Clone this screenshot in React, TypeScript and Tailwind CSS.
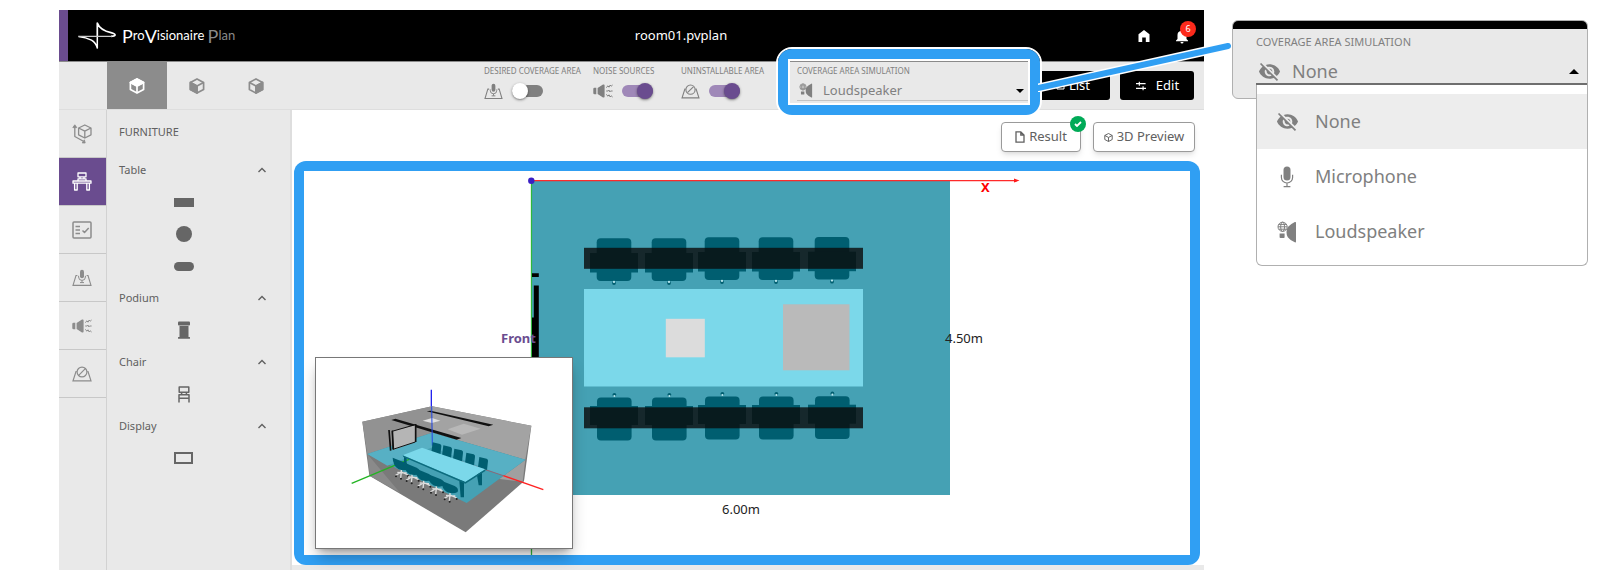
import { useState } from "react";
import type { ReactNode } from "react";

type IconProps = { className?: string };

/* ---------- icons ---------- */

function Cube({ face, className }: IconProps & { face: "top" | "left" | "right" | "none" }) {
  return (
    <svg viewBox="0 0 16 16" className={className} fill="none" stroke="currentColor" strokeWidth="1.700" strokeLinejoin="round" aria-hidden="true">
      <path d="M8 .9 14.6 4.4v7.2L8 15.1 1.4 11.6V4.4Z" />
      <path d="M1.4 4.4 8 7.9l6.6-3.5M8 7.9v7.2" />
      {face === "top" && <path fill="currentColor" d="M8 .9 14.6 4.4 8 7.9 1.4 4.4Z" />}
      {face === "left" && <path fill="currentColor" d="M1.4 4.4 8 7.9v7.2L1.4 11.6Z" />}
      {face === "right" && <path fill="currentColor" d="M14.6 4.4 8 7.9v7.2l6.6-3.5Z" />}
    </svg>
  );
}

function MicArea({ className }: IconProps) {
  return (
    <svg viewBox="0 0 20 18" className={className} fill="none" stroke="currentColor" strokeWidth="1.1" aria-hidden="true">
      <path d="M5.400 6.500H4L1 16.400h18L16 6.500h-1.400" />
      <rect x="8" y=".800" width="4" height="8.400" rx="2" fill="currentColor" stroke="none" />
      <path d="M6.600 6.800v1.200a3.400 3.400 0 0 0 6.800 0V6.800M10 11.400v2M8 13.600h4" strokeWidth="1" />
    </svg>
  );
}

function NoiseSource({ className }: IconProps) {
  return (
    <svg viewBox="0 0 20 14" className={className} fill="none" stroke="currentColor" strokeWidth="1" aria-hidden="true">
      <path fill="currentColor" stroke="none" d="M1.500 3.800h1.800v6.400H1.500Q.300 10.200.300 9V5Q.300 3.800 1.500 3.800ZM4.600 4 10 .600Q11.600 0 11.600 1.600v10.800q0 1.600-1.600 1L4.600 10Z" />
      <path d="M13.200 3.600 15 1.800l1 1.400L17.200 1l1 1.200L19.600 1M13.200 7h2l.800-.900.800 1.800.800-.900h2M13.200 10.400 15 12.200l1-1.400 1.200 2.200 1-1.200 1.400 1.200" />
    </svg>
  );
}

function NoInstall({ className }: IconProps) {
  return (
    <svg viewBox="0 0 20 16" className={className} fill="none" stroke="currentColor" strokeWidth="1.200" aria-hidden="true">
      <path d="M4.800 5.500H4L1 14.800h18L16 5.500h-.800" />
      <circle cx="10" cy="6" r="4.900" />
      <path d="m6.700 9.300 6.600-6.600" />
    </svg>
  );
}

function LoudspeakerIcon({ className }: IconProps) {
  return (
    <svg viewBox="0 0 20 22" className={className} fill="none" stroke="currentColor" strokeWidth="1" aria-hidden="true">
      <circle cx="5.600" cy="5.800" r="4.600" />
      <ellipse cx="5.600" cy="5.800" rx="2" ry="4.600" />
      <path d="M1 5.800h9.200M1.800 3.400h7.600M1.800 8.200h7.600" />
      <path fill="currentColor" stroke="none" d="M2.600 12.400h5v3.800q0 .800-.800.800H3.400q-.800 0-.800-.800ZM19 1.800v18.800q0 1.200-1.200.700-5-2.200-7-5Q9.500 14.500 9.500 11.300q0-3.800 1.600-5.500 2.600-2.600 6.700-4.700Q19 .500 19 1.800Z" />
    </svg>
  );
}

function MicIcon({ className }: IconProps) {
  return (
    <svg viewBox="0 0 20 22" className={className} fill="none" stroke="currentColor" strokeWidth="1.200" aria-hidden="true">
      <rect x="6.500" y=".600" width="7" height="14" rx="3.500" fill="currentColor" stroke="none" />
      <path d="M4.400 8.800v2.600a5.600 5.600 0 0 0 11.200 0V8.800M10 17v3.600M6.600 20.700h6.800" />
    </svg>
  );
}

function HiddenIcon({ className }: IconProps) {
  return (
    <svg viewBox="0 0 24 24" className={className} fill="currentColor" aria-hidden="true">
      <path d="M12 7c2.760 0 5 2.240 5 5 0 .650-.130 1.260-.360 1.830l2.920 2.920c1.510-1.260 2.700-2.890 3.430-4.750-1.730-4.390-6-7.500-11-7.500-1.400 0-2.740.250-3.980.700l2.160 2.160C10.740 7.130 11.350 7 12 7zM2 4.270l2.280 2.280.460.460C3.080 8.300 1.780 10.020 1 12c1.730 4.390 6 7.500 11 7.500 1.550 0 3.030-.300 4.380-.840l.420.420L19.730 22 21 20.730 3.270 3 2 4.270zM7.530 9.800l1.550 1.550c-.050.210-.080.430-.080.650 0 1.660 1.340 3 3 3 .220 0 .440-.030.650-.080l1.550 1.550c-.670.330-1.410.530-2.200.530-2.760 0-5-2.240-5-5 0-.790.200-1.530.530-2.200zm4.310-.780 3.150 3.150.020-.160c0-1.660-1.340-3-3-3l-.170.010z" />
    </svg>
  );
}

function ModelAxes({ className }: IconProps) {
  return (
    <svg viewBox="0 0 20 20" className={className} fill="none" stroke="currentColor" strokeWidth="1.300" strokeLinejoin="round" aria-hidden="true">
      <path d="M12.800 1 19 4v6.800L12.800 14 6.600 10.800V4ZM6.600 4l6.200 3.200L19 4M12.800 7.200V14" />
      <path d="M2.800 2v10.500l8.600 4.700" />
      <path fill="currentColor" strokeWidth=".800" d="M.800 3.600 2.800.800l2 2.800ZM10.200 18.900l3 .100-.800-3.200Z" />
    </svg>
  );
}

function DeskIcon({ className }: IconProps) {
  return (
    <svg viewBox="0 0 20 19" className={className} fill="none" stroke="currentColor" strokeWidth="1.300" strokeLinejoin="round" aria-hidden="true">
      <path d="M6 1h8v3.800H6ZM8 4.800v2h4v-2M6 9V6.800h8V9M1 9h18v2.200H1ZM2.600 11.200V18h2.600v-6.800M14.800 11.200V18h2.600v-6.800" />
    </svg>
  );
}

function ChecklistIcon({ className }: IconProps) {
  return (
    <svg viewBox="0 0 20 18" className={className} fill="none" stroke="currentColor" strokeWidth="1.500" strokeLinejoin="round" aria-hidden="true">
      <rect x="1" y="1" width="18" height="16" rx="1" />
      <path d="M3.500 5.500H8M3.500 9H8M3.500 12.500H8M10.500 9.500l2 2 4.200-4.500" />
    </svg>
  );
}

function ChairIcon({ className }: IconProps) {
  return (
    <svg viewBox="0 0 12 17" className={className} fill="none" stroke="currentColor" strokeWidth="1.500" strokeLinejoin="round" aria-hidden="true">
      <path d="M1.200 1h9.600v5.200H1.200ZM3.600 6.200v2.400M8.400 6.200v2.400M1 16.500V8.800h10v7.700M1 12.200h10" />
    </svg>
  );
}

function PodiumIcon({ className }: IconProps) {
  return (
    <svg viewBox="0 0 12 18" className={className} fill="currentColor" aria-hidden="true">
      <rect y=".5" width="12" height="4" rx="1" />
      <rect x="1.500" y="5" width="9" height="11" />
      <rect y="16" width="12" height="1.800" rx=".5" />
    </svg>
  );
}

function SwapIcon({ className }: IconProps) {
  return (
    <svg viewBox="0 0 14 12" className={className} fill="none" stroke="currentColor" strokeWidth="1.400" aria-hidden="true">
      <path d="M1 3.200h11.500M5 .8v4.800M1 8.800h12M9.500 6.400v4.800" />
    </svg>
  );
}

function Chevron({ className }: IconProps) {
  return (
    <svg viewBox="0 0 8 6" className={className} fill="none" stroke="currentColor" strokeWidth="1.400" aria-hidden="true">
      <path d="m.500 5 3.500-3.500L7.500 5" />
    </svg>
  );
}

function Logo() {
  return (
    <svg viewBox="0 0 38 27" className="h-[27px] w-[38px]" fill="none" stroke="white" strokeLinejoin="round" aria-hidden="true">
      <path d="M19.300 14.400V1Q22 8.200 33 10.600 37.500 11.800 37 13.200 36.500 14.400 33 14.400" strokeWidth="1.700" />
      <path d="M.500 14.400Q8 15.200 13.500 18.200 18 21 19.300 26V14.400" strokeWidth="1.500" />
      <path d="M.5 14.400H34" strokeWidth="1.300" stroke="#c8c8c8" />
    </svg>
  );
}

/* ---------- controls ---------- */

function ToggleField({ id, label, icon, defaultOn, className }: { id: string; label: string; icon: ReactNode; defaultOn: boolean; className: string }) {
  const [on, setOn] = useState(defaultOn);
  return (
    <div className={`flex flex-col pb-1.5 text-[#808080] ${className}`}>
      <label htmlFor={id} className="whitespace-nowrap text-[8px] leading-[17px]">{label}</label>
      <div className="flex h-6 items-center gap-[9px]">
        {icon}
        <span className="relative flex h-4 w-[31px] items-center">
          <input
            id={id}
            type="checkbox"
            role="switch"
            checked={on}
            onChange={() => setOn(!on)}
            className="peer h-3 w-full cursor-pointer appearance-none rounded-full bg-[#808080] checked:bg-[#9f88b8]"
          />
          <span className="pointer-events-none absolute left-0 size-4 rounded-full bg-white shadow-sm shadow-black/40 peer-checked:left-auto peer-checked:right-0 peer-checked:bg-[#6a4c8f]" />
        </span>
      </div>
    </div>
  );
}

function RailButton({ label, active, children }: { label: string; active?: boolean; children: ReactNode }) {
  return (
    <button
      type="button"
      aria-label={label}
      className={`flex h-12 w-full items-center justify-center border-b border-[#c8c8c8] pr-[2px] ${active ? "bg-[#6a4c8f] text-white" : "text-[#8c8c8c]"}`}
    >
      {children}
    </button>
  );
}

function Section({ title, items }: { title: string; items: { name: string; shape: ReactNode }[] }) {
  const [open, setOpen] = useState(true);
  return (
    <section>
      <button type="button" aria-expanded={open} onClick={() => setOpen(!open)} className="flex h-8 w-full items-center justify-between pl-3 pr-6 text-[11px]">
        {title}
        <Chevron className={`h-[6px] w-2 ${open ? "" : "rotate-180"}`} />
      </button>
      {open &&
        items.map((item) => (
          <button key={item.name} type="button" aria-label={item.name} className="flex h-8 w-full items-center justify-center pr-[30px] text-[#666]">
            {item.shape}
          </button>
        ))}
    </section>
  );
}

/* ---------- room drawings ---------- */

const seats = [
  { x: 614, y: 0 },
  { x: 669, y: 0 },
  { x: 722, y: -1 },
  { x: 776, y: -1 },
  { x: 832, y: -1.300 },
];

function FloorPlan() {
  return (
    <svg viewBox="304 171 886 384" className="size-full" role="img" aria-label="Floor plan of the room" fontFamily="Noto Sans, sans-serif" fontSize="13">
      <rect x="531.500" y="181" width="418.500" height="314" fill="#45a1b4" />
      <path d="M531.500 181v374" stroke="#30b83c" strokeWidth="1.300" />
      <path d="M531 180.600h484" stroke="#ff2a2a" strokeWidth="1.400" />
      <path d="m1014 178.600 5.500 2-5.500 2Z" fill="#ff1a1a" />
      <circle cx="531.300" cy="180.800" r="3.200" fill="#3a1fc4" />
      <path d="M532 273.300h6.800v3.600H532ZM533.800 285.400h5V360h-6.800V317.500h1.800Z" fill="#000" />
      {seats.map((s) => (
        <g key={s.x} fill="#005e70">
          <rect x={s.x - 17.300} y={238.300 + s.y} width="34.600" height="42.600" rx="4" />
          <rect x={s.x - 24} y={253 + s.y} width="48" height="19.500" />
          <circle cx={s.x} cy={283 + s.y} r="1.900" />
          <circle cx={s.x} cy={281.900 + s.y} r="1.100" fill="#b9e9f0" />
          <rect x={s.x - 17} y={397.600 + s.y} width="34.600" height="42.800" rx="4" />
          <rect x={s.x - 24} y={406 + s.y} width="48" height="19" />
          <circle cx={s.x + 0.400} cy={394.800 + s.y} r="1.900" />
          <circle cx={s.x + 0.400} cy={396 + s.y} r="1.100" fill="#b9e9f0" />
        </g>
      ))}
      <rect x="584" y="247.800" width="279" height="21" fill="#0a0a0a" opacity=".8" />
      <rect x="584" y="407.300" width="279" height="21" fill="#0a0a0a" opacity=".8" />
      <rect x="584" y="289" width="279" height="97.500" fill="#7bd8ea" />
      <rect x="665.800" y="318.800" width="39" height="38.500" fill="#dcdcdc" />
      <rect x="783" y="304.300" width="66.500" height="66" fill="#bababa" />
      <text x="501" y="343" fill="#6a4c8f" fontWeight="700">Front</text>
      <text x="981" y="192" fill="#f00" fontWeight="700">X</text>
      <text x="945" y="343" fill="#222">4.50m</text>
      <text x="722" y="514" fill="#222">6.00m</text>
    </svg>
  );
}

const backSeats = [
  [396, 275],
  [428, 284],
  [461, 294],
  [497, 306],
  [536, 319],
];
const frontSeats = [
  [300, 345],
  [332, 359],
  [367, 377],
  [405, 394],
  [446, 414],
];

function RoomPreview() {
  return (
    <svg viewBox="48 22 768 570" className="block h-[190px] w-64" role="img" aria-label="Three-dimensional room view">
      <path d="M187 213 396 167 694 225 672 392 497 545 208 375Z" fill="#7a7a7a" />
      <path d="M396 167 694 225 676 327 397 246Z" fill="#a3a3a3" />
      <path d="M396 167 187 213 202 310 397 246Z" fill="#929292" />
      <path d="m202 310 8 66 90 50Z" fill="#8a8a8a" />
      <path d="m676 327-8 66-70-8Z" fill="#a0a0a0" />
      <path d="M202 310 397 246 676 327 500 457Z" fill="#45a1b4" />
      <path d="M202 310 397 246 676 327 610 376 397 290 262 345Z" fill="#57b0c4" />
      <path d="m380 182 12-2 188 42-14 5Z" fill="#111" />
      <path d="m274 208 12-4 198 58-14 5Z" fill="#111" />
      <path d="m443 236 48-17 51 15-56 18Z" fill="#b8b8b8" />
      <path d="m368 210 28-8 25 8-26 7Z" fill="#e0e0e0" />
      <path d="m277 242 68-18v50l-66 24Z" fill="#b5b5b5" />
      <path d="m277 242 2 54 67-22M276 242l70-20" stroke="#111" strokeWidth="3" fill="none" />
      <path d="m277 240 3 56M347 220v54M267 238l5 62" stroke="#111" strokeWidth="5" fill="none" />
      <path d="M394 117v50" stroke="#2323ee" strokeWidth="4" />
      <path d="M395 167l2 118" stroke="#2348e8" strokeWidth="3" />
      <path d="m155 398 172-72" stroke="#22b422" strokeWidth="4" />
      <path d="m460 325 150 50" stroke="#8c6878" strokeWidth="3" />
      <path d="m610 375 120 42" stroke="#f22" strokeWidth="4" />
      {backSeats.map(([x, y]) => (
        <path key={x} d={`M${x + 2} ${y}l22 5q5 2 4 7l-3 27-27-8Z`} fill="#005e70" />
      ))}
      <path d="m530 368 16-6v42h-10Z" fill="#005e70" />
      <path d="m312 318 8 2v24h-8Z" fill="#005e70" />
      {frontSeats.map(([x, y]) => (
        <g key={x}>
          <path d={`M${x + 4} ${y + 5}v14M${x - 14} ${y + 30}l18-11 20 9M${x + 4} ${y + 19}l-2 18M${x - 8} ${y + 20}l28 2`} stroke="#dedede" strokeWidth="4" fill="none" />
          <path d={`M${x - 22} ${y - 24}l40 16q13 6 9 18-14 8-32 0-16-10-17-34Z`} fill="#005e70" />
          <circle cx={x - 12} cy={y + 32} r="3" fill="#222" />
          <circle cx={x + 3} cy={y + 39} r="3" fill="#222" />
          <circle cx={x + 24} cy={y + 31} r="3" fill="#222" />
        </g>
      ))}
      <path d="m478 390 14-2v52h-10Z" fill="#005e70" />
      <path d="m308 314 58-23 190 65-60 38Z" fill="#7bd8ea" />
      <path d="m308 314 188 80 60-38v5l-60 38-186-80Z" fill="#0c6c7e" />
    </svg>
  );
}

/* ---------- page ---------- */

const choices = [
  { name: "None", icon: <HiddenIcon className="size-[23px]" /> },
  { name: "Microphone", icon: <MicIcon className="h-[22px] w-5" /> },
  { name: "Loudspeaker", icon: <LoudspeakerIcon className="h-[22px] w-5" /> },
];

export default function App() {
  const [mode, setMode] = useState("Loudspeaker");
  const [choice, setChoice] = useState("None");

  return (
    <div className="flex min-h-screen gap-7 bg-white pl-[59px] pr-3 pt-[10px] font-['Noto_Sans',sans-serif]">
      <div className="flex min-w-0 flex-1 flex-col">
        <header className="flex h-[51px] items-center border-l-[9px] border-[#6a4c8f] bg-black text-white">
          <div className="flex w-44 items-center gap-[6px] pl-[10px]">
            <Logo />
            <span className="whitespace-nowrap font-['Lato',sans-serif] text-[13px]">
              <span className="inline-block align-middle text-[18px] leading-none">P</span>ro
              <span className="inline-block align-middle text-[18px] leading-none">V</span>isionaire{" "}
              <span className="text-[#8a8a8a]">
                <span className="inline-block align-middle text-[18px] leading-none">P</span>lan
              </span>
            </span>
          </div>
          <h1 className="flex-1 pr-5 text-center text-[13px]">room01.pvplan</h1>
          <div className="flex items-center gap-6 pr-[14px]">
            <button type="button" aria-label="Home">
              <svg viewBox="0 0 12 12" className="size-3" fill="currentColor" aria-hidden="true">
                <path d="M6 0 .5 4.200V12h3.700V7.500h3.600V12h3.700V4.200Z" />
              </svg>
            </button>
            <button type="button" aria-label="Notifications" className="relative">
              <svg viewBox="0 0 16 16" className="size-4" fill="currentColor" aria-hidden="true">
                <path d="M8 1.500a1.200 1.200 0 0 0-1.200 1.200C4.700 3.300 3.500 5 3.500 7v4L2 12.500v.800h12v-.800L12.500 11V7c0-2-1.200-3.700-3.300-4.300A1.200 1.200 0 0 0 8 1.500ZM6.500 14a1.500 1.500 0 0 0 3 0Z" />
              </svg>
              <span className="absolute -top-[7px] left-1.5 flex size-4 items-center justify-center rounded-full bg-[#fb2a1c] text-[9px]">6</span>
            </button>
          </div>
        </header>

        <div className="flex h-[49px] items-center border-y border-b-[#dedede] border-t-[#8a8a8a] bg-[#e9e9e9]">
          <nav className="flex h-full pl-12" aria-label="View angle">
            <button type="button" aria-label="Top view" className="flex w-[60px] items-center justify-center bg-[#8c8c8c] text-white">
              <Cube face="top" className="size-4" />
            </button>
            <button type="button" aria-label="Front view" className="flex w-[59px] items-center justify-center text-[#8c8c8c]">
              <Cube face="left" className="size-4" />
            </button>
            <button type="button" aria-label="Side view" className="flex w-[59px] items-center justify-center text-[#8c8c8c]">
              <Cube face="right" className="size-4" />
            </button>
          </nav>

          <div className="ml-auto flex items-center pr-[10px]">
            <ToggleField id="coverage" label="DESIRED COVERAGE AREA" defaultOn={false} className="w-[109px]" icon={<MicArea className="h-[17px] w-[19px]" />} />
            <ToggleField id="noise" label="NOISE SOURCES" defaultOn className="w-[88px]" icon={<NoiseSource className="h-[14px] w-5" />} />
            <ToggleField id="uninstallable" label="UNINSTALLABLE AREA" defaultOn className="w-[116px]" icon={<NoInstall className="h-[15px] w-[19px]" />} />

            <div className="relative z-10 w-[231px] pb-2 text-[#808080]">
              <label htmlFor="simulation" className="block text-[8px] leading-[17px]">COVERAGE AREA SIMULATION</label>
              <div className="relative flex h-[22px] items-center border-b border-[#c4c4c4] pt-[2px]">
                <LoudspeakerIcon className="ml-[2px] h-[15px] w-[14px]" />
                <select
                  id="simulation"
                  value={mode}
                  onChange={(e) => setMode(e.target.value)}
                  className="h-5 flex-1 appearance-none bg-transparent pl-[10px] text-[13px] outline-none"
                >
                  <option>None</option>
                  <option>Microphone</option>
                  <option>Loudspeaker</option>
                </select>
                <span className="pointer-events-none absolute right-1 border-x-4 border-t-4 border-x-transparent border-t-black" />
              </div>
              <div className="pointer-events-none absolute -bottom-2 -left-[21px] -right-[14px] -top-[15px] rounded-2xl border-2 border-white">
                <div className="h-full rounded-[14px] border-[10px] border-[#309ff3]">
                  <div className="h-full border-2 border-white" />
                </div>
              </div>
              <svg viewBox="0 0 194 52" className="pointer-events-none absolute -top-[22px] left-full ml-[10px] h-[52px] w-[194px]" fill="none" strokeLinecap="round" aria-hidden="true">
                <path d="M0 48 190 6" stroke="#fff" strokeWidth="9" />
                <path d="M0 48 190 6" stroke="#309ff3" strokeWidth="6" />
              </svg>
            </div>

            <button type="button" className="ml-2 flex h-[29px] w-[74px] items-center justify-center gap-1 rounded-[3px] bg-black text-[13px] text-white">
              <svg viewBox="0 0 9 9" className="size-[9px]" fill="none" stroke="currentColor" aria-hidden="true">
                <path d="M1 1h7v7H1ZM2.500 3.500h4M2.500 5.500h4" />
              </svg>
              List
            </button>
            <button type="button" className="ml-[10px] flex h-[29px] w-[74px] items-center justify-center gap-[9px] rounded-[3px] bg-black text-[13px] text-white">
              <SwapIcon className="h-[10px] w-3" />
              Edit
            </button>
          </div>
        </div>

        <div className="flex flex-1">
          <nav className="w-12 border-r border-[#d2d2d2] bg-[#e9e9e9]" aria-label="Tools">
            <RailButton label="Room"><ModelAxes className="size-5" /></RailButton>
            <RailButton label="Furniture" active><DeskIcon className="h-[19px] w-5" /></RailButton>
            <RailButton label="Devices"><ChecklistIcon className="h-[18px] w-5" /></RailButton>
            <RailButton label="Desired coverage area"><MicArea className="h-[18px] w-5" /></RailButton>
            <RailButton label="Noise sources"><NoiseSource className="h-[14px] w-5" /></RailButton>
            <RailButton label="Uninstallable area"><NoInstall className="h-4 w-5" /></RailButton>
          </nav>

          <aside className="w-[185px] border-r-2 border-[#dedede] bg-[#e9e9e9] text-[#606060]">
            <h2 className="flex h-11 items-center pl-3 text-[11px]">FURNITURE</h2>
            <Section
              title="Table"
              items={[
                { name: "Rectangular table", shape: <span className="h-[9px] w-5 bg-current" /> },
                { name: "Round table", shape: <span className="size-4 rounded-full bg-current" /> },
                { name: "Oval table", shape: <span className="h-[9px] w-5 rounded-full bg-current" /> },
              ]}
            />
            <Section title="Podium" items={[{ name: "Podium block", shape: <PodiumIcon className="h-[18px] w-3" /> }]} />
            <Section title="Chair" items={[{ name: "Office chair", shape: <ChairIcon className="h-[17px] w-3" /> }]} />
            <Section title="Display" items={[{ name: "Wall display", shape: <span className="h-3 w-[19px] border-2 border-current" /> }]} />
          </aside>

          <main className="flex min-w-0 flex-1 flex-col border-b-[5px] border-[#e9e9e9]">
            <div className="flex justify-end gap-3 pb-[9px] pr-[9px] pt-3 text-[#606060]">
              <button type="button" className="relative flex h-[30px] w-20 items-center justify-center gap-1 rounded border border-[#9a9a9a] bg-white text-[13px] shadow-md">
                <svg viewBox="0 0 10 12" className="h-3 w-[10px]" fill="none" stroke="currentColor" strokeWidth="1.300" aria-hidden="true">
                  <path d="M1 .8h4.800L9 4v7.200H1ZM5.800.8V4H9" />
                </svg>
                Result
                <span className="absolute -right-[6px] -top-[7px] flex size-4 items-center justify-center rounded-full bg-[#00aa57]">
                  <svg viewBox="0 0 8 6" className="h-[6px] w-2" fill="none" stroke="white" strokeWidth="1.800" aria-hidden="true">
                    <path d="m1 3 2 2 4-4" />
                  </svg>
                </span>
              </button>
              <button type="button" className="flex h-[30px] w-[102px] items-center justify-center gap-1 rounded border border-[#9a9a9a] bg-white text-[13px] shadow-md">
                <Cube face="none" className="size-[9px]" />
                3D Preview
              </button>
            </div>

            <div className="relative ml-[2px] mr-1 min-h-0 flex-1 rounded-xl bg-[#309ff3] p-[10px]">
              <div className="h-full bg-white">
                <FloorPlan />
              </div>
              <div className="absolute bottom-4 left-[21px] border border-[#777] bg-white shadow-lg shadow-black/30">
                <RoomPreview />
              </div>
            </div>
          </main>
        </div>
      </div>

      <aside className="relative mt-[10px] h-[79px] w-[356px] shrink-0 rounded-md border border-[#b0b0b0] bg-[#e9e9e9] text-[#808080]">
        <div className="h-2 rounded-t-[5px] bg-black" />
        <div className="pl-[23px]">
          <p id="choice-label" className="pt-1 text-[11px] leading-[18px]">COVERAGE AREA SIMULATION</p>
          <button type="button" aria-haspopup="listbox" aria-expanded="true" aria-labelledby="choice-label" className="mt-1 flex h-[30px] w-full items-center border-b-2 border-[#6e6e6e] pl-[2px] pr-2 pt-1 text-[18px]">
            <HiddenIcon className="size-[23px]" />
            <span className="ml-[11px]">{choice}</span>
            <span className="ml-auto border-x-[5px] border-b-[5px] border-x-transparent border-b-black" />
          </button>
        </div>
        <ul role="listbox" aria-labelledby="choice-label" className="absolute -right-px left-[23px] top-16 rounded-b-md border border-t-0 border-[#b0b0b0] bg-white pb-[6px] pt-[9px]">
          {choices.map((c) => (
            <li
              key={c.name}
              role="option"
              aria-selected={c.name === choice}
              onClick={() => setChoice(c.name)}
              className={`flex h-[55px] cursor-pointer items-center pl-[18px] text-[18px] ${c.name === choice ? "bg-[#ededed]" : ""}`}
            >
              <span className="flex w-6 justify-center">{c.icon}</span>
              <span className="ml-4">{c.name}</span>
            </li>
          ))}
        </ul>
      </aside>
    </div>
  );
}
